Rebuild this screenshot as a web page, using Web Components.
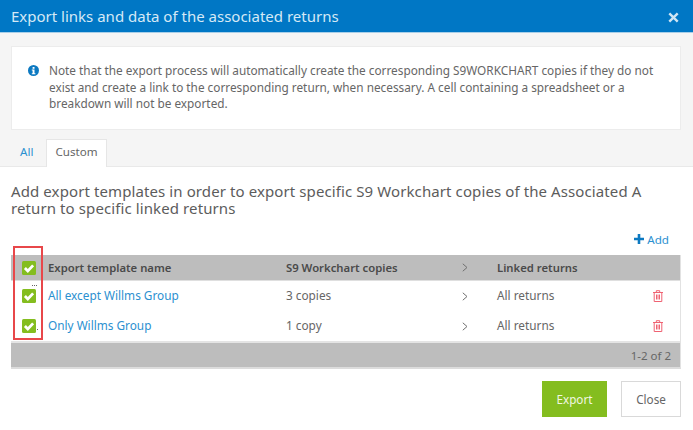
<!DOCTYPE html>
<html lang="en"><head><meta charset="utf-8"><title>Export</title>
<style>
html,body{margin:0;padding:0;background:#fff}
body{font-family:"Noto Sans","Open Sans",sans-serif;color:#5c5c5c;width:693px;height:430px;overflow:hidden}
</style></head><body>
<export-dialog title-text="Export links and data of the associated returns">
  <info-note>Note that the export process will automatically create the corresponding S9WORKCHART copies if they do not exist and create a link to the corresponding return, when necessary. A cell containing a spreadsheet or a breakdown will not be exported.</info-note>
  <tab-bar></tab-bar>
  <template-panel slot="panel"></template-panel>
</export-dialog>
<script>
function def(name, css, html){
  customElements.define(name, class extends HTMLElement{
    connectedCallback(){
      if(this.shadowRoot) return;
      const r=this.attachShadow({mode:'open'});
      r.innerHTML='<style>'+css+'</style>'+(typeof html==='function'?html(this):html);
    }
  });
}
const CHECK='<svg width="14" height="14" viewBox="0 0 14 14" aria-hidden="true"><rect width="14" height="14" rx="1.5" fill="#84bd1f"/><path d="M2.9 7l2.9 2.9 5.3-5.5" fill="none" stroke="#fff" stroke-width="2.8"/></svg>';
const TRASH='<svg width="10" height="12" viewBox="0 0 10 12" aria-hidden="true" fill="none" stroke="#ef6272" stroke-width="1"><path d="M0 2.5h10M3.3 2.5V.7h3.4v1.8M1.2 2.5v9h7.6v-9M3.5 4.5v5M5 4.5v5M6.5 4.5v5"/></svg>';
const CHEV='<svg width="6" height="9" viewBox="0 0 6 9" aria-hidden="true"><path d="M.8.8L5 4.5.8 8.2" fill="none" stroke="#707070" stroke-width="1"/></svg>';
def('export-dialog',`
  :host{display:flex;flex-direction:column;width:693px;height:430px}
  header{height:32px;background:#0077c5;border-bottom:1px solid #a9cfe8;display:flex;align-items:center;justify-content:space-between;padding:0 14px 0 11px;color:#d5e9f6;font-size:15px;flex:none}
  svg{display:block;margin-top:2px}
  .top{background:#f5f5f5;padding:13px 12px 0 11px;border-bottom:1px solid #e9e9e9;flex:none}
`,h=>`<header><span>${h.getAttribute('title-text')}</span><svg width="11" height="11" viewBox="0 0 11 11"><path d="M1.3 1.3l8.4 8.4M9.7 1.3l-8.4 8.4" stroke="#cfe5f4" stroke-width="2.4"/></svg></header>
  <div class="top"><slot></slot></div><slot name="panel"></slot>`);
def('info-note',`
  :host{display:flex;gap:10px;background:#fff;border:1px solid #ececec;height:84px;box-sizing:border-box;padding:15px 10px 0 16px;font-size:11.8px;line-height:16.6px;color:#666}
  svg{flex:none;margin-top:3px}
`,`<svg width="11" height="11" viewBox="0 0 11 11"><circle cx="5.5" cy="5.5" r="5.5" fill="#0c79c1"/><rect x="4.6" y="2" width="1.9" height="1.8" fill="#fff"/><path d="M3.8 4.6h2.7v3.6h.9v1H3.8v-1h.8V5.6h-.8z" fill="#fff"/></svg><span><slot></slot></span>`);
def('tab-bar',`
  :host{display:flex;align-items:flex-end;height:37px;box-sizing:border-box;margin-bottom:-1px;font-size:11.6px;position:relative}
  a{color:#2b90d0;padding:0 12px 2px 9px;line-height:26px;width:14px}
  b{font-weight:400;color:#666;background:#fff;border:1px solid #e6e6e6;border-bottom:0;height:28px;line-height:24px;box-sizing:border-box;width:61px;text-align:center}
`,`<a>All</a><b>Custom</b>`);
def('template-panel',`
  :host{display:block;position:relative;flex:1;background:#fff;box-sizing:border-box;padding:16px 12px 0 11px}
  p{margin:0;font-size:15px;line-height:16.5px;color:#5c5c5c;max-width:645px;letter-spacing:.1px}
  .add{display:flex;justify-content:flex-end;align-items:center;gap:3px;margin:13px 0 6px;height:20px;padding-right:12px;font-size:11.6px;color:#2b90d0}
  .marker{position:absolute;left:13px;top:79px;width:30px;height:94px;box-sizing:border-box;border:2px solid #e8474a;pointer-events:none}
  .dots{position:absolute;left:32px;top:118px;width:6px;height:1px;background:repeating-linear-gradient(90deg,#666 0 1px,transparent 1px 2px)}
  .dot{position:absolute;left:37px;top:162px;width:1px;height:1px;background:#666}
  .foot{display:flex;justify-content:flex-end;gap:14px;margin-top:12px}
  button{font:inherit;font-size:11.7px;height:36px;box-sizing:border-box;padding:0}
  .go{width:65px;background:#84bd1f;border:0;color:#f1f7e2}
  .no{width:60px;background:#fff;border:1px solid #d9d9d9;color:#666}
`,`<p>Add export templates in order to export specific S9 Workchart copies of the Associated A return to specific linked returns</p>
<div class="add"><svg width="10" height="10" viewBox="0 0 10 10"><path d="M5 0v10M0 5h10" stroke="#0c79c1" stroke-width="2.6"/></svg><span>Add</span></div>
<template-table></template-table>
<div class="marker"></div><div class="dots"></div><div class="dot"></div>
<div class="foot"><button class="go">Export</button><button class="no">Close</button></div>`);
def('template-table',`
  :host{display:block;border-right:1px solid #e2e2e2;border-bottom:2px solid #dcdcdc;font-size:11.8px;color:#666}
  .r{display:grid;grid-template-columns:37px 238px 176px 35px 1fr 27px;align-items:center}
  .h{height:26px;box-sizing:border-box;background:#bdbdbd;font-weight:600;font-size:11.3px;color:#4a4a4a;border-bottom:1px solid #dfdfdf}
  .d{height:30px;box-sizing:border-box;padding-bottom:2px}
  a{color:#2b90d0}
  svg{display:block}
  .box{padding-left:11px}
  .d .box{padding-top:2px}
  .d .t{padding-top:2px}
  .f{height:26px;box-sizing:border-box;background:#bdbdbd;border-top:2px solid #e4e4e4;display:flex;align-items:center;justify-content:flex-end;padding-right:9px;font-size:11.5px}
`,`<div class="r h"><div class="box">${CHECK}</div><div>Export template name</div><div>S9 Workchart copies</div><div>${CHEV}</div><div>Linked returns</div><div></div></div>
<div class="r d"><div class="box">${CHECK}</div><div><a>All except Willms Group</a></div><div>3 copies</div><div class="t">${CHEV}</div><div>All returns</div><div class="t">${TRASH}</div></div>
<div class="r d"><div class="box">${CHECK}</div><div><a>Only Willms Group</a></div><div>1 copy</div><div class="t">${CHEV}</div><div>All returns</div><div class="t">${TRASH}</div></div>
<div class="f">1-2 of 2</div>`);
</script>
</body></html>
